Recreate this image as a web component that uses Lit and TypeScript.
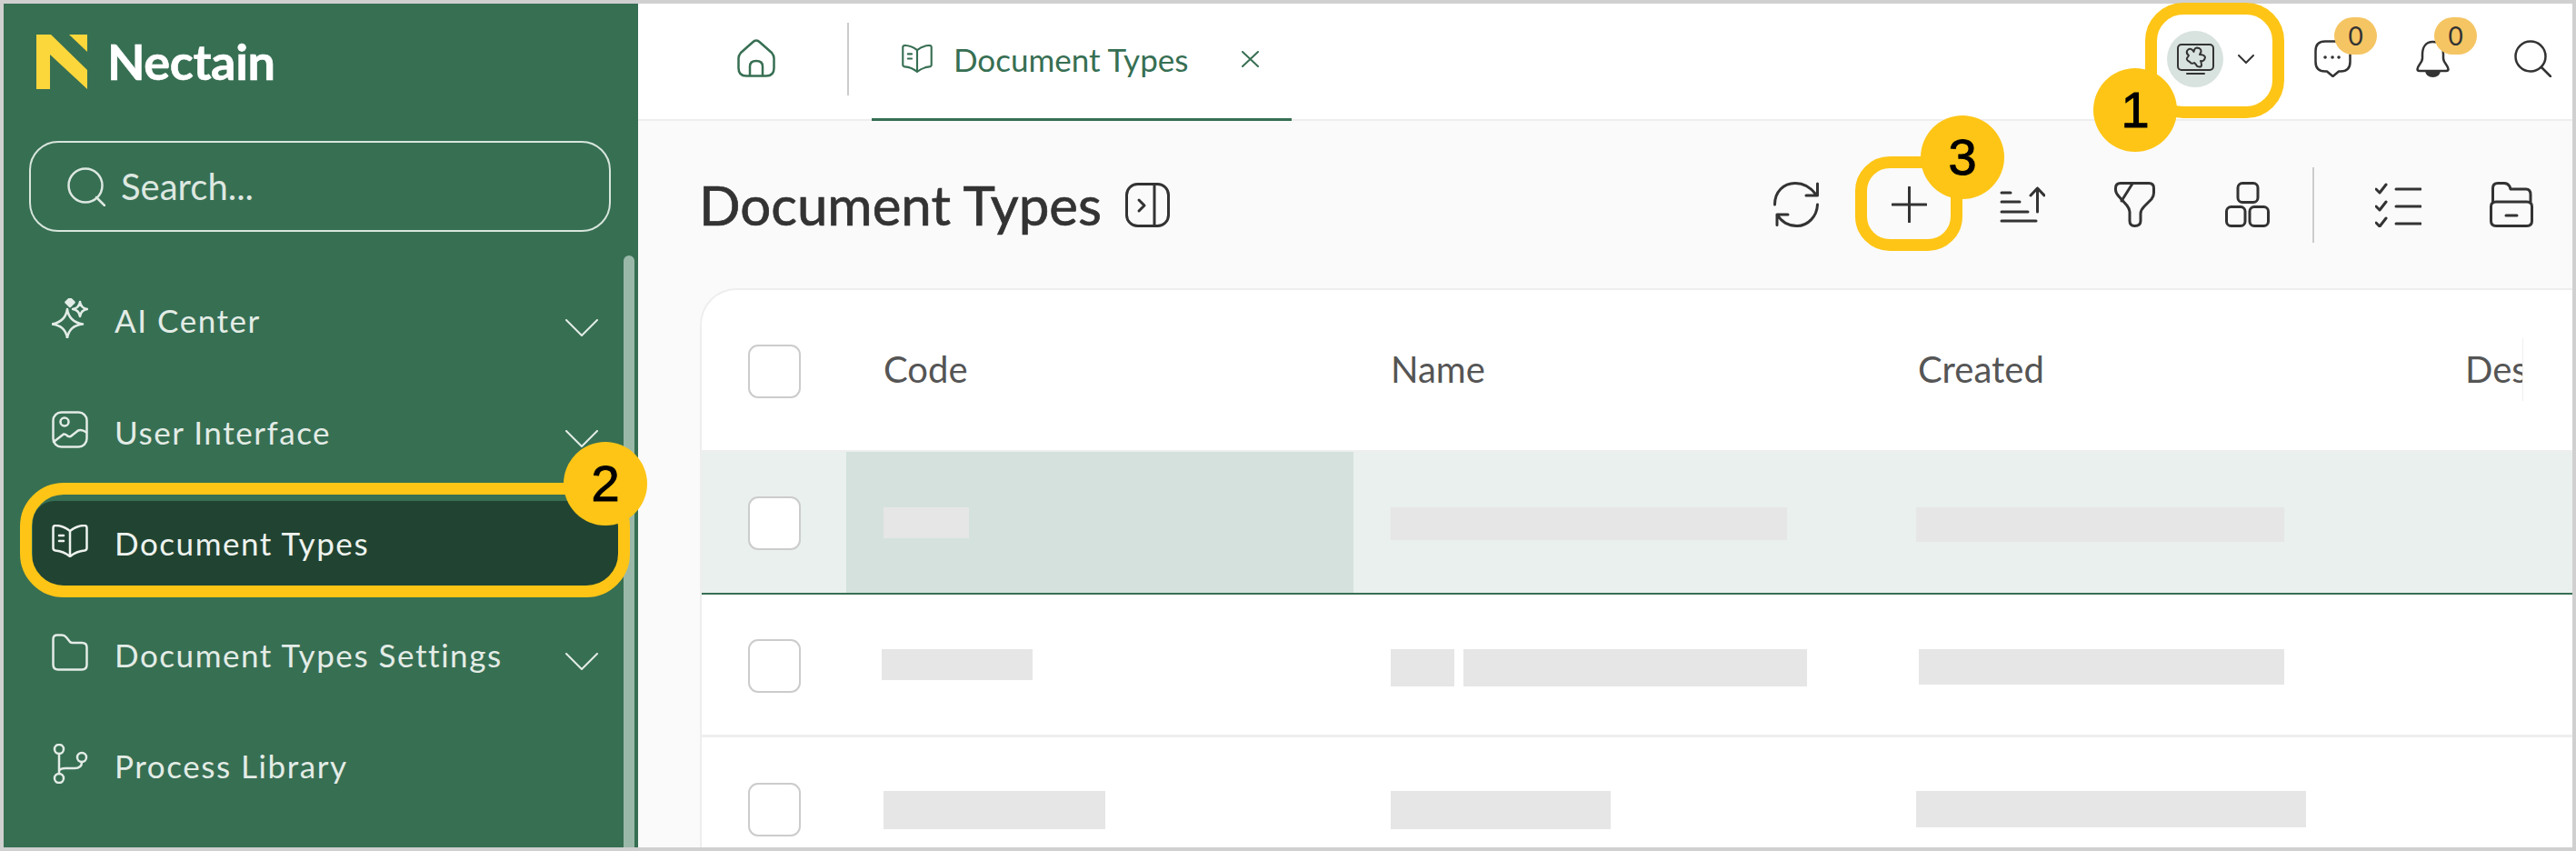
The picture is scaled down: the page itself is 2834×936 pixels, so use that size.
import { LitElement, css, html, svg, type TemplateResult } from 'lit';
import { customElement } from 'lit/decorators.js';

const icon = (w: number, h: number, body: TemplateResult, cls = '') => html`
    <svg class="icon ${cls}" width="${w}" height="${h}" viewBox="0 0 ${w} ${h}">${body}</svg>
`;

const BOOK = svg`<path d="M20 7C15 3 8 1 4 1Q1.5 1 1.5 3.5V26Q1.5 28 4 28.500C10 29 15 31 20 35C25 31 30 29 36 28.500Q38.500 28 38.500 26V3.500Q38.500 1 36 1C32 1 25 3 20 7V35"/><path d="M8 12H13M8 18H13"/>`;
const CHEVRON = icon(36, 19, svg`<path d="M1 1L18 18L35 1"/>`, 'chevron');

const navItems = [
    { label: 'AI Center', open: true, active: false, art: icon(40, 44, svg`<path d="M17 12Q19 26 34 28.500Q19 30 17 44Q15 30 0 28.500Q15 26 17 12Z"/><path class="solid" d="M20 0L24.500 4.500L20 9L15.500 4.500Z"/><path d="M31 4Q32 11 39 12Q32 13 31 20Q30 13 23 12Q30 11 31 4Z"/>`) },
    { label: 'User Interface', open: true, active: false, art: icon(40, 41, svg`<rect x="1.500" y="1.500" width="37" height="38" rx="9"/><circle cx="14" cy="12" r="4.500"/><path d="M2 34L13 25.500Q15 25 18 28Q20 29 22 27L29 21.500Q33 20 38 23.500"/>`) },
    { label: 'Document Types', open: false, active: true, art: icon(40, 36, BOOK) },
    { label: 'Document Types Settings', open: true, active: false, art: icon(40, 41, svg`<path d="M1.500 6Q1.500 1.500 6 1.500H11Q14 1.500 16 4L20 9Q21 10 23 10H33Q38.500 10 38.500 15V34Q38.500 39.500 33 39.500H7Q1.500 39.500 1.500 34Z"/>`) },
    { label: 'Process Library', open: false, active: false, art: icon(40, 44, svg`<circle cx="8" cy="6" r="5"/><circle cx="8" cy="38" r="5"/><circle cx="33" cy="15" r="5"/><path d="M8 11V33M8 30Q9 27 15 27H25Q33 27 33 20"/>`) },
];

// x, y are relative to the cell and the row, every value is read off the reference
const rows = [
    {
        cls: 'selected', box: 49, cells: [
            [{ x: 0, y: 61, w: 94, h: 34 }],
            [{ x: 0, y: 61, w: 436, h: 36 }],
            [{ x: -2, y: 61, w: 405, h: 38 }],
        ],
    },
    {
        cls: '', box: 49, cells: [
            [{ x: -2, y: 60, w: 166, h: 34 }],
            [{ x: 0, y: 60, w: 70, h: 41 }, { x: 10, y: 60, w: 378, h: 41 }],
            [{ x: 1, y: 60, w: 402, h: 39 }],
        ],
    },
    {
        cls: '', box: 50, cells: [
            [{ x: 0, y: 59, w: 244, h: 42 }],
            [{ x: 0, y: 59, w: 242, h: 42 }],
            [{ x: -2, y: 59, w: 429, h: 40 }],
        ],
    },
];

@customElement('app-root')
export class AppRoot extends LitElement {

    static styles = css`
        :host {
            display: block;
            position: relative;
            width: 2834px;
            height: 936px;
            box-sizing: border-box;
            padding: 4px;
            background: #d0d0d0;
            overflow: hidden;
            font-family: Lato, "Open Sans", sans-serif;
        }

        .app {
            display: flex;
            height: 100%;
        }

        .icon {
            display: block;
            flex: none;
            fill: none;
            stroke: currentColor;
            stroke-width: 2.5;
            stroke-linecap: round;
            stroke-linejoin: round;
        }

        .solid {
            fill: currentColor;
        }

        /* sidebar */
        .sidebar {
            flex: none;
            width: 698px;
            display: flex;
            flex-direction: column;
            background: #376f53;
            color: #e3ece6;
            overflow: hidden;
        }

        .brand {
            display: flex;
            align-items: center;
            gap: 22px;
            height: 60px;
            padding: 34px 0 0 36px;
        }

        .brand-name {
            font-size: 54px;
            font-weight: 700;
            letter-spacing: -0.400px;
            color: #fff;
            line-height: 60px;
            -webkit-text-stroke: 0.600px #fff;
        }

        .search {
            display: flex;
            align-items: center;
            gap: 17px;
            box-sizing: border-box;
            width: 640px;
            height: 100px;
            margin: 57px 0 0 28px;
            padding-left: 40px;
            border: 2.500px solid #d7e6dc;
            border-radius: 32px;
            font-size: 40px;
            color: #dde8e1;
        }

        .nav-wrap {
            flex: 1;
            display: flex;
            min-height: 0;
            margin-top: 26px;
        }

        .nav {
            flex: 1;
            padding-top: 10px;
        }

        .nav-row {
            height: 122.500px;
            display: flex;
            align-items: center;
        }

        .nav-pill {
            flex: 1;
            height: 93px;
            display: flex;
            align-items: center;
            gap: 29px;
            margin: 0 6px 0 32px;
            padding: 0 22px 0 21px;
            border-radius: 24px;
            font-size: 35px;
            letter-spacing: 1.550px;
        }

        .nav-pill.active {
            background: #214432;
            color: #eef3ef;
        }

        .nav-pill .icon:first-child {
            margin-top: -5px;
        }

        .nav-label {
            flex: 1;
            white-space: nowrap;
        }

        .chevron {
            margin-top: 16px;
            stroke-width: 2;
        }

        .scrollbar {
            flex: none;
            width: 12px;
            background: #9ab8a8;
            border-radius: 6px 6px 0 0;
        }

        .sidebar-edge {
            flex: none;
            width: 4px;
        }

        /* main */
        .main {
            flex: 1;
            min-width: 0;
            display: flex;
            flex-direction: column;
            background: #fafafa;
        }

        .topbar {
            flex: none;
            height: 129px;
            box-sizing: border-box;
            display: flex;
            align-items: stretch;
            background: #fff;
            border-bottom: 2px solid #eeeeee;
        }

        .home {
            display: flex;
            align-items: center;
            padding: 0 79px 7px 109px;
            color: #376f53;
        }

        .home + .rule {
            align-self: flex-start;
            margin-top: 21px;
        }

        .rule {
            flex: none;
            width: 2px;
            height: 80px;
            background: #cccccc;
        }

        .tab {
            display: flex;
            align-items: center;
            box-sizing: border-box;
            width: 462px;
            margin: 0 0 -2px 25px;
            padding: 0 0 5px 33px;
            border-bottom: 3px solid #376f53;
            color: #376f53;
            font-size: 35px;
        }

        .tab-name {
            margin: 0 59px 0 23px;
            white-space: nowrap;
        }

        .tab-close {
            stroke-width: 2;
        }

        .actions {
            margin-left: auto;
            display: flex;
            align-items: flex-start;
            padding: 40px 23px 0 0;
            color: #333;
        }

        .env {
            display: flex;
            align-items: center;
            gap: 16px;
            margin: -10px 66px 0 0;
        }

        .avatar {
            width: 62px;
            height: 62px;
            border-radius: 50%;
            background: #d8e2df;
            display: flex;
            align-items: center;
            justify-content: center;
        }

        .avatar .icon {
            stroke-width: 2;
        }

        .env > .icon {
            stroke-width: 2;
        }

        .counter {
            position: relative;
        }

        .chat {
            margin-right: 71px;
        }

        .bell {
            margin-right: 71px;
        }

        .count {
            position: absolute;
            top: -25px;
            left: 22px;
            width: 47px;
            height: 41px;
            border-radius: 21px;
            background: #f5c563;
            color: #333;
            font-size: 28px;
            line-height: 41px;
            text-align: center;
        }

        .bell .count {
            left: 20px;
        }

        .page-head {
            flex: none;
            height: 50px;
            display: flex;
            align-items: center;
            gap: 26px;
            padding: 67px 0 67px 67px;
        }

        .page-title {
            font-size: 60px;
            font-weight: 400;
            line-height: 50px;
            color: #333;
            -webkit-text-stroke: 0.700px #333;
            white-space: nowrap;
        }

        .page-head > .icon {
            color: #333;
            stroke-width: 3;
        }

        .toolbar {
            margin-left: auto;
            display: flex;
            align-items: center;
            color: #333;
            padding-right: 43px;
        }

        .toolbar .icon {
            stroke-width: 3;
        }

        .toolbar .rule {
            height: 83px;
            margin: 0 67px 0 47px;
        }

        /* table */
        .card {
            flex: 1;
            min-height: 0;
            margin-left: 68px;
            background: #fff;
            border: solid #eeeeee;
            border-width: 2px 0 0 2px;
            border-top-left-radius: 40px;
            overflow: hidden;
        }

        .table-row {
            display: grid;
            grid-template-columns: 159px 558px 580px 602px 105px 1fr;
            align-items: start;
            box-sizing: border-box;
            height: 157px;
            border-bottom: 3px solid #eeeeee;
        }

        .table-row.head {
            height: 176px;
            border-bottom: none;
            font-size: 40px;
            color: #555;
        }

        .table-row.selected {
            height: 159px;
            background: #e9f0ed;
            border-top: 2px solid #eeeeee;
            border-bottom: 2px solid #376f53;
        }

        .table-row.selected .cell:nth-child(2) {
            background: #d4e1dc;
        }

        .check-cell {
            display: flex;
            justify-content: center;
        }

        .box {
            width: 58px;
            height: 59px;
            box-sizing: border-box;
            border: 2px solid #cccccc;
            border-radius: 11px;
            background: #fff;
        }

        .cell {
            display: flex;
            height: 100%;
            padding-left: 41px;
            box-sizing: border-box;
        }

        .head .check-cell {
            padding-top: 60px;
        }

        .head-label {
            padding-top: 65px;
            line-height: 44px;
            white-space: nowrap;
            overflow: hidden;
        }

        .head .last {
            border-right: 1px solid #eeeeee;
            height: 69px;
            margin-top: 53px;
            padding-top: 12px;
        }

        .bone {
            flex: none;
            background: #e6e6e6;
        }

        /* annotation marks over the page */
        .ring {
            position: absolute;
            box-sizing: border-box;
            border: 13px solid #fec516;
        }

        .ring-env {
            left: 2360px;
            top: 3px;
            width: 153px;
            height: 127px;
            border-radius: 42px;
        }

        .ring-nav {
            left: 22px;
            top: 531px;
            width: 671px;
            height: 126px;
            border-radius: 48px;
        }

        .ring-add {
            left: 2041px;
            top: 172px;
            width: 118px;
            height: 104px;
            border-radius: 38px;
        }

        .step {
            position: absolute;
            width: 92px;
            height: 92px;
            border-radius: 50%;
            background: #fec516;
            color: #000;
            font-family: "Liberation Sans", Arial, sans-serif;
            font-size: 56px;
            line-height: 92px;
            text-align: center;
            -webkit-text-stroke: 1px #000;
        }

        .step-1 {
            left: 2303px;
            top: 75px;
        }

        .step-2 {
            left: 620px;
            top: 486px;
        }

        .step-3 {
            left: 2113px;
            top: 127px;
        }
    `;

    private renderNav() {
        return navItems.map((item) => html`
            <div class="nav-row">
                <div class="nav-pill ${item.active ? 'active' : ''}">
                    ${item.art}
                    <span class="nav-label">${item.label}</span>
                    ${item.open ? CHEVRON : ''}
                </div>
            </div>
        `);
    }

    private renderTable() {
        return html`
            <div class="table-row head">
                <div class="check-cell"><div class="box"></div></div>
                <div class="cell head-label">Code</div>
                <div class="cell head-label">Name</div>
                <div class="cell head-label">Created</div>
                <div class="cell head-label last">Description</div>
            </div>
            ${rows.map((row) => html`
                <div class="table-row ${row.cls}">
                    <div class="check-cell" style="padding-top:${row.box}px"><div class="box"></div></div>
                    ${row.cells.map((bones) => html`
                        <div class="cell">
                            ${bones.map((b) => html`<div class="bone" style="margin:${b.y}px 0 0 ${b.x}px;width:${b.w}px;height:${b.h}px"></div>`)}
                        </div>
                    `)}
                </div>
            `)}
        `;
    }

    render() {
        return html`
            <div class="app">
                <aside class="sidebar">
                    <div class="brand">
                        <svg width="56" height="60" viewBox="0 0 56 60">
                            <path fill="#fcd73c" d="M0 0H16L56 39V60L15 22V60H0Z"/>
                            <path fill="#fcd73c" d="M36 0H56V19Z"/>
                        </svg>
                        <span class="brand-name">Nectain</span>
                    </div>
                    <div class="search">
                        ${icon(42, 43, svg`<circle cx="20" cy="20" r="18.500"/><path d="M32 33L41 42"/>`)}
                        <span>Search...</span>
                    </div>
                    <div class="nav-wrap">
                        <nav class="nav">${this.renderNav()}</nav>
                        <div class="scrollbar"></div>
                        <div class="sidebar-edge"></div>
                    </div>
                </aside>

                <main class="main">
                    <header class="topbar">
                        <div class="home">
                            ${icon(42, 42, svg`<path d="M21 1.500Q19 1.500 17 3.500L4 15Q1.500 18 1.500 21V32Q1.500 40.500 10 40.500H32Q40.500 40.500 40.500 32V21Q40.500 18 38 15L25 3.500Q23 1.500 21 1.500Z"/><path d="M14 40V30Q14 24 21 24Q28 24 28 30V40"/>`)}
                        </div>
                        <div class="rule"></div>
                        <div class="tab">
                            <svg class="icon" width="34" height="31" viewBox="0 0 40 36">${BOOK}</svg>
                            <span class="tab-name">Document Types</span>
                            ${icon(19, 18, svg`<path d="M1 1L18 17M18 1L1 17"/>`, 'tab-close')}
                        </div>
                        <div class="actions">
                            <div class="env">
                                <div class="avatar">
                                    ${icon(41, 35, svg`
                                        <rect x="1" y="1" width="39" height="28" rx="4"/>
                                        <path d="M11 33H30"/>
                                        <path d="M11 8Q14 4 17 7L18.500 9Q19 5 22 4.500Q27 5 26.500 9L25 12Q30 12 31 15Q30 20 26 19Q28 24 26 25.500Q22 26 21 23L19 21Q16 23 14 20Q10 18 11 16L13 13Q10 11 11 8Z"/>
                                    `)}
                                </div>
                                ${icon(18, 10, svg`<path d="M1 1L9 9L17 1"/>`)}
                            </div>
                            <div class="counter chat">
                                ${icon(41, 41, svg`<path d="M12 1.500H29Q39.500 1.500 39.500 12V24Q39.500 34.500 29 34.500H27L20.500 40L14 34.500H12Q1.500 34.500 1.500 24V12Q1.500 1.500 12 1.500Z"/><path class="solid" d="M12 19h.1M20 19h.1M27 19h.1" stroke-width="3.500"/>`)}
                                <span class="count">0</span>
                            </div>
                            <div class="counter bell">
                                ${icon(37, 41, svg`<path d="M18.500 2C10 2 7 9 7 16V20C7 25 1.500 28 1.500 32Q1.500 34 4 34H33Q35.500 34 35.500 32C35.500 28 30 25 30 20V16C30 9 27 2 18.500 2Z"/><path class="solid" stroke="none" d="M10 34H27Q26 41 18.500 41Q11 41 10 34Z"/>`)}
                                <span class="count">0</span>
                            </div>
                            ${icon(41, 41, svg`<circle cx="18" cy="18" r="16.500"/><path d="M30 30L40 40"/>`)}
                        </div>
                    </header>

                    <section class="page-head">
                        <span class="page-title">Document Types</span>
                        ${icon(49, 49, svg`<rect x="1.500" y="1.500" width="46" height="46" rx="12"/><path d="M32 2V47M15 19L21 25L15 31"/>`)}
                        <div class="toolbar">
                            ${icon(50, 50, svg`<path d="M1.500 25C1.500 11 11 1.500 24 1.500C33 1.500 41 6 47 14M48.500 2V15H36M48.500 25C48 38 38 48.500 26 48.500C17 48.500 9 44 4 36M4 47.500V36H16"/>`)}
                            <div style="width:80px"></div>
                            ${icon(39, 40, svg`<path d="M1 20H38M19.500 1V39"/>`)}
                            <div style="width:80px"></div>
                            ${icon(50, 40, svg`<path d="M2 7H12M2 17H22M2 28H31M2 38H40M41.500 28V2M34 10L41.500 2L49 10"/>`)}
                            <div style="width:76px"></div>
                            ${icon(45, 50, svg`<path d="M7 1.500H38Q43.500 1.500 43.500 7V12Q43.500 16 41 19L33 27Q29 31 29 35V43Q29 48.500 22.500 48.500Q17 48.500 17 43V33Q17 30 14 26L5 16Q1.500 12 1.500 9V7Q1.500 1.500 7 1.500Z"/><path d="M20 2L8 21"/>`)}
                            <div style="width:77px"></div>
                            ${icon(49, 50, svg`<rect x="14" y="1.500" width="22" height="21" rx="5"/><rect x="1.500" y="27.500" width="20.500" height="21" rx="5"/><rect x="27" y="27.500" width="20.500" height="21" rx="5"/>`)}
                            <div class="rule"></div>
                            ${icon(51, 49, svg`<path d="M1 7L5 11L12 2M1 26L5 30L12 21M1 44L5 48L12 39M23 7H50M23 26H50M23 45H50"/>`)}
                            <div style="width:75px"></div>
                            ${icon(48, 50, svg`<path d="M3.500 22V7Q3.500 1.500 9 1.500H16Q20 1.500 22 5L23 8H40Q45 8 45 14V22M1.500 27Q1.500 22 7 22H41Q46.500 22 46.500 27V43Q46.500 48.500 41 48.500H7Q1.500 48.500 1.500 43ZM18 37H30"/>`)}
                        </div>
                    </section>

                    <section class="card">${this.renderTable()}</section>
                </main>
            </div>

            <div class="ring ring-env"></div>
            <div class="ring ring-nav"></div>
            <div class="ring ring-add"></div>
            <div class="step step-1">1</div>
            <div class="step step-2">2</div>
            <div class="step step-3">3</div>
        `;
    }
}
